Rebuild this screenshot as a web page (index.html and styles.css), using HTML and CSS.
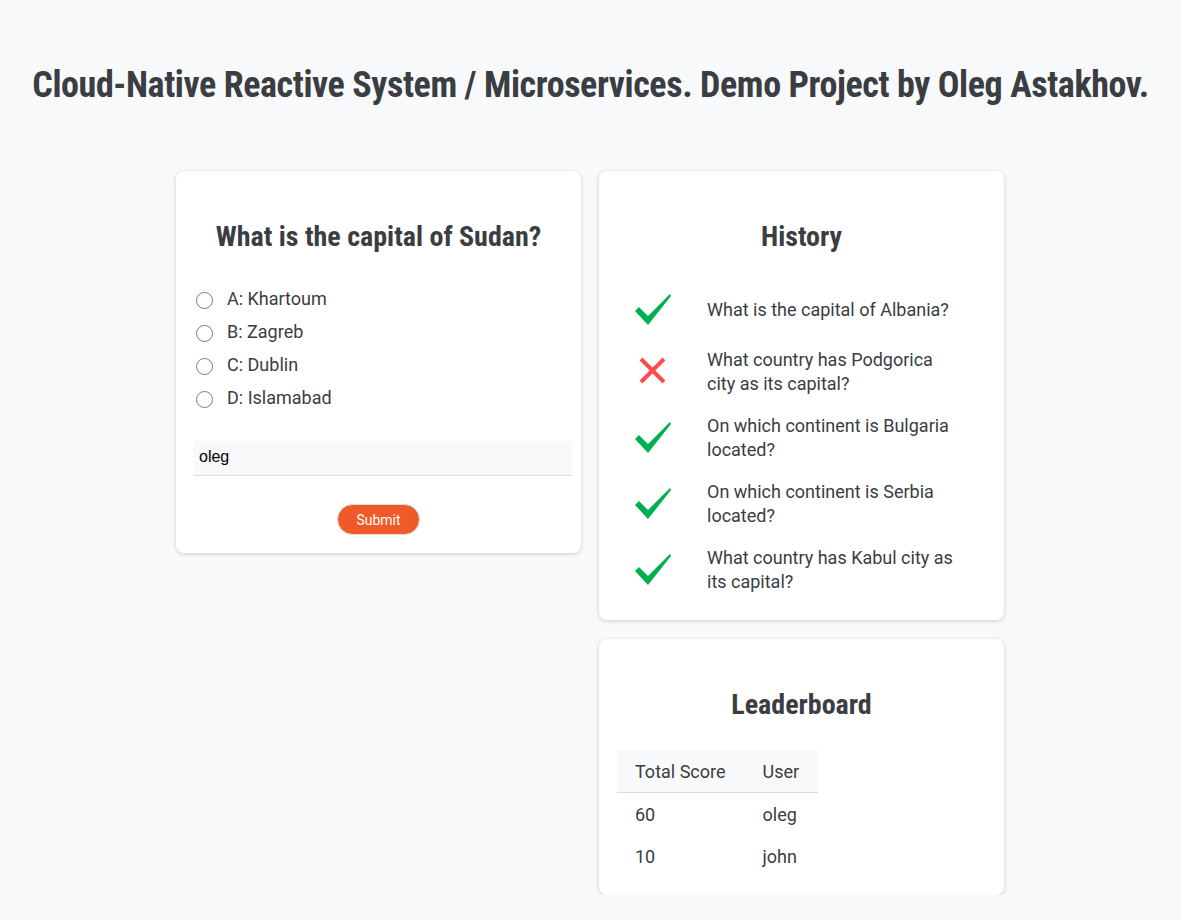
FILE: index.html
```html
<!DOCTYPE html>
<html>
<head>
<meta charset="utf-8">
<link rel="stylesheet" href="styles.css">
</head>
<body>
<h1 class="title">Cloud-Native Reactive System / Microservices. Demo Project by Oleg Astakhov.</h1>
<div class="columns">
  <div class="col">
    <div class="card quiz">
      <h2 class="card-title">What is the capital of Sudan?</h2>
      <ul class="options">
        <li><span class="radio"></span>A: Khartoum</li>
        <li><span class="radio"></span>B: Zagreb</li>
        <li><span class="radio"></span>C: Dublin</li>
        <li><span class="radio"></span>D: Islamabad</li>
      </ul>
      <div class="input">oleg</div>
      <div class="btn-row"><button class="submit">Submit</button></div>
    </div>
  </div>
  <div class="col">
    <div class="card history">
      <h2 class="card-title">History</h2>
      <ul class="hist">
        <li><span class="ico"><svg width="38" height="34" viewBox="0 0 38 34"><polygon points="1,18 5,14 14,23 36,1 37,3 14,32" fill="#00b050"/></svg></span><span class="q">What is the capital of Albania?</span></li>
        <li><span class="ico"><svg width="38" height="34" viewBox="0 0 38 34"><path d="M7 4 L30 27 M30 4 L7 27" fill="none" stroke="#fd4c4c" stroke-width="4"/></svg></span><span class="q">What country has Podgorica city as its capital?</span></li>
        <li><span class="ico"><svg width="38" height="34" viewBox="0 0 38 34"><polygon points="1,18 5,14 14,23 36,1 37,3 14,32" fill="#00b050"/></svg></span><span class="q">On which continent is Bulgaria located?</span></li>
        <li><span class="ico"><svg width="38" height="34" viewBox="0 0 38 34"><polygon points="1,18 5,14 14,23 36,1 37,3 14,32" fill="#00b050"/></svg></span><span class="q">On which continent is Serbia located?</span></li>
        <li><span class="ico"><svg width="38" height="34" viewBox="0 0 38 34"><polygon points="1,18 5,14 14,23 36,1 37,3 14,32" fill="#00b050"/></svg></span><span class="q">What country has Kabul city as its capital?</span></li>
      </ul>
    </div>
    <div class="card leaders">
      <h2 class="card-title">Leaderboard</h2>
      <table class="board">
        <thead><tr><th>Total Score</th><th>User</th></tr></thead>
        <tbody>
          <tr><td>60</td><td>oleg</td></tr>
          <tr><td>10</td><td>john</td></tr>
        </tbody>
      </table>
    </div>
  </div>
</div>
</body>
</html>
```
FILE: styles.css
```css
html, body { margin: 0; padding: 0; }
body {
  background: #f8f9fa;
  font-family: Roboto, "Noto Sans", sans-serif;
  color: #3a3d42;
}
.title {
  margin: 0;
  padding-top: 64px;
  height: 42px;
  line-height: 42px;
  text-align: center;
  font-size: 36px;
  font-weight: 700;
  font-stretch: condensed;
  color: #3a3d42;
  letter-spacing: -0.4px;
}
.columns {
  display: flex;
  justify-content: center;
  gap: 18px;
  margin-top: 65px;
  padding-right: 1px;
}
.col {
  width: 405px;
  display: flex;
  flex-direction: column;
  gap: 19px;
}
.card {
  background: #fff;
  border-radius: 8px;
  box-shadow: 0 1px 4px rgba(0,0,0,0.18);
}
.card-title {
  margin: 0;
  text-align: center;
  font-size: 28px;
  font-weight: 700;
  font-stretch: condensed;
  line-height: 34px;
  color: #3a3d42;
}
.quiz { padding: 49px 18px 18px 18px; height: 315px; }
.options { list-style: none; margin: 28px 0 0 0; padding: 0; }
.options li {
  display: flex;
  align-items: center;
  height: 33px;
  font-size: 18px;
}
.radio {
  width: 17px; height: 17px;
  border: 1.5px solid #7a7a7a;
  border-radius: 50%;
  margin: 3px 14px 0 2px;
  box-sizing: border-box;
}
.input {
  margin-top: 27px;
  margin-right: -9px;
  height: 35px;
  box-sizing: border-box;
  background: #f8f9fa;
  border-bottom: 1px solid #dcdcdc;
  font-family: "Liberation Sans", Arial, sans-serif;
  font-size: 16px;
  color: #000;
  padding: 7px 5px;
}
.btn-row { display: flex; justify-content: center; margin-top: 28px; }
.submit {
  background: #f05a28;
  color: #fff;
  border: 1px solid #e0dcdc;
  border-radius: 16px;
  font-family: Roboto, sans-serif;
  font-size: 14px;
  height: 31px;
  width: 83px;
  padding: 0;
}
.history { padding: 49px 18px 26px 18px; }
.hist { list-style: none; margin: 32px 0 0 0; padding: 0; }
.hist li {
  display: flex;
  align-items: center;
  min-height: 48px;
  margin-bottom: 18px;
}
.hist li:first-child { margin-bottom: 14px; }
.ico { width: 38px; margin-left: 17px; margin-right: 35px; display: flex; }
.q { font-size: 18px; line-height: 24px; width: 254px; }
.hist li:last-child { margin-bottom: 0; }
.leaders { padding: 49px 18px 18px 18px; }
.board {
  margin-top: 28px;
  border-collapse: collapse;
  font-size: 18px;
}
.board th {
  background: #f8f9fa;
  font-weight: 400;
  text-align: left;
  height: 42px;
  padding: 0 19px 0 18px;
  border-bottom: 1px solid #dcdcdc;
}
.board td { height: 42px; padding: 0 19px 0 18px; }
```
